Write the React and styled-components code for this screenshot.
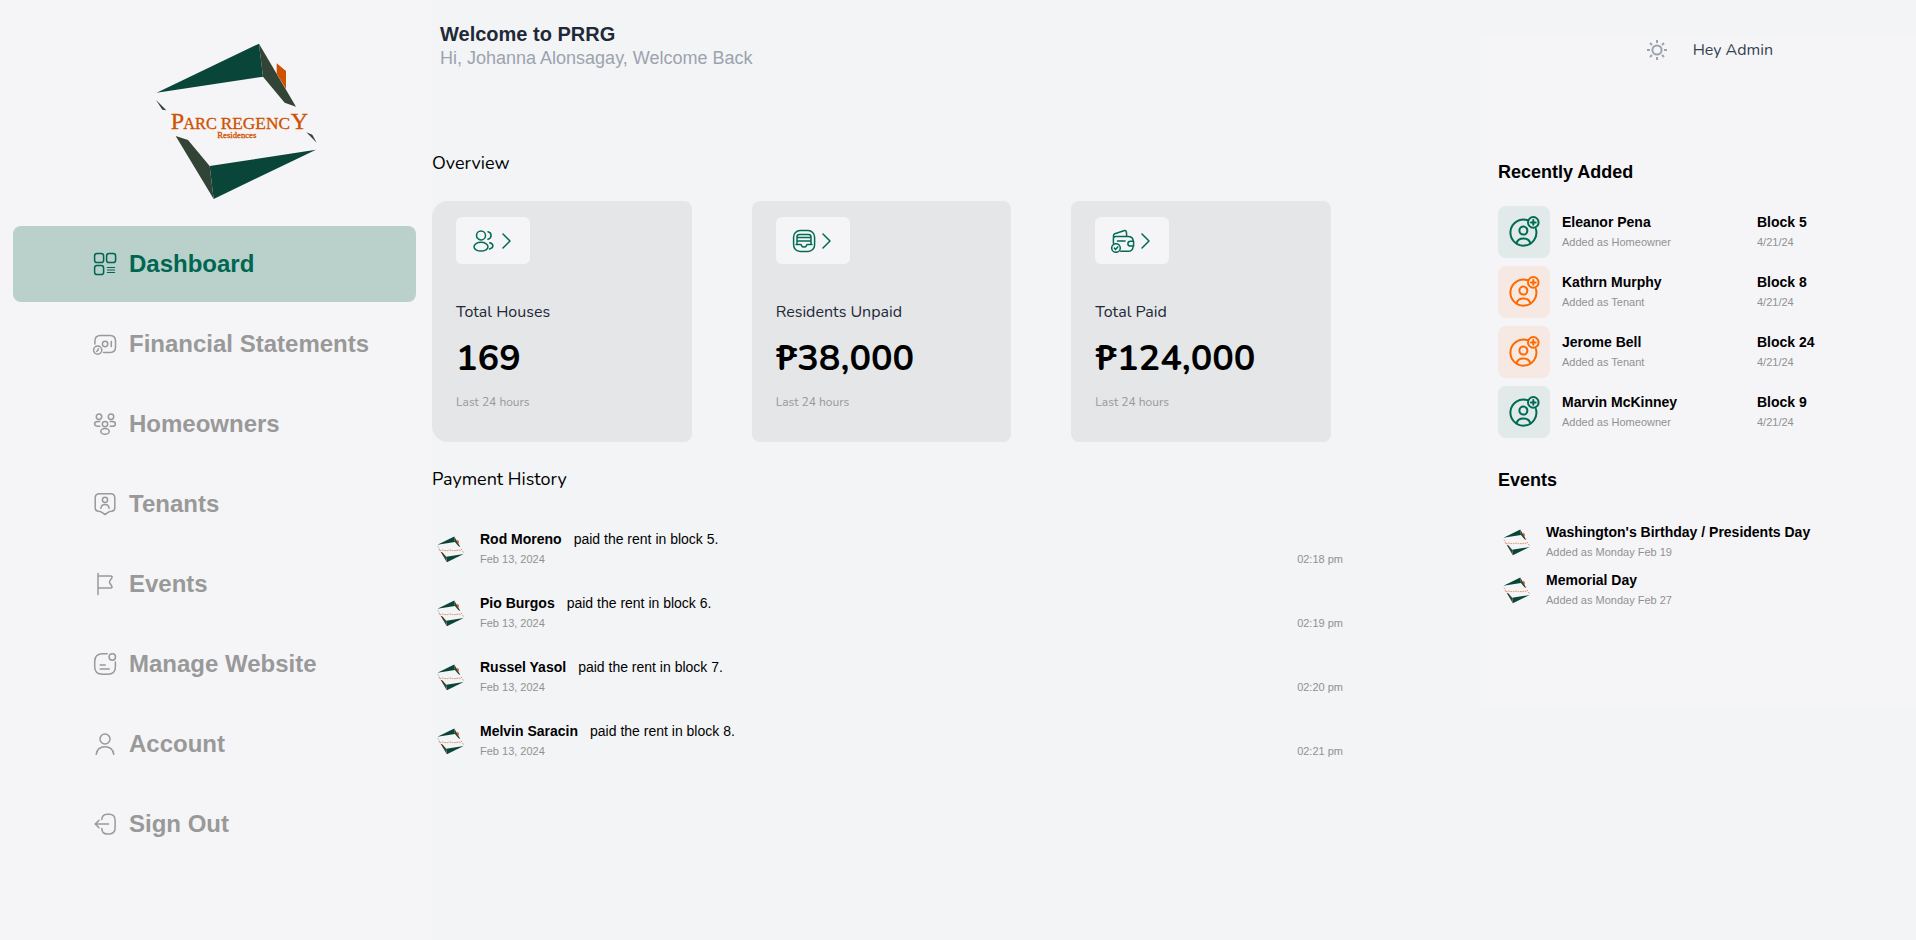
import React from "react";
import styled, { createGlobalStyle } from "styled-components";

const sans = `"Liberation Sans", Arial, sans-serif`;
const rounded = `Nunito, "Open Sans", "Noto Sans", sans-serif`;

const GlobalStyle = createGlobalStyle`
  *, *::before, *::after { box-sizing: border-box; }
  body { margin: 0; background: #f3f4f6; color: #000; font-family: ${sans}; }
  h1, h2, p, ul { margin: 0; padding: 0; }
  ul { list-style: none; }
`;

const Page = styled.div`
  display: grid;
  grid-template-columns: 432fr 1049fr 435fr;
  align-items: start;
  min-height: 100vh;
`;

const Sidebar = styled.aside`
  align-self: stretch;
  padding: 40px 16px 24px 13px;
  background: #f5f5f8;
`;

const Brand = styled.div`
  display: flex;
  justify-content: center;
  padding: 0 0 22px 42px;
`;

const Nav = styled.nav`
  display: flex;
  flex-direction: column;
  gap: 4px;
`;

const NavLink = styled.a`
  display: flex;
  align-items: center;
  gap: 12px;
  height: 76px;
  padding-left: 80px;
  border-radius: 8px;
  font-size: 24px;
  font-weight: 700;
  line-height: 32px;
  text-decoration: none;
  white-space: nowrap;
  color: ${(p) => (p.$active ? "#006652" : "#999999")};
  background: ${(p) => (p.$active ? "#b9d0cb" : "transparent")};
`;

const Main = styled.main`
  padding: 22px 138px 24px 0;
`;

const Welcome = styled.header`
  padding-left: 8px;
  margin-bottom: 79px;
`;

const WelcomeTitle = styled.h1`
  font-size: 20px;
  line-height: 24px;
  color: #1f2937;
`;

const WelcomeText = styled.p`
  font-size: 18px;
  line-height: 24px;
  color: #9ca3af;
`;

const SectionTitle = styled.h2`
  margin-bottom: 24px;
  font-family: ${rounded};
  font-size: 18px;
  font-weight: 400;
  line-height: 28px;
`;

const Cards = styled.div`
  display: grid;
  grid-template-columns: repeat(3, 1fr);
  gap: 60px;
  margin: 0 12px 23px 0;
`;

const Card = styled.article`
  display: flex;
  flex-direction: column;
  align-items: flex-start;
  padding: 16px 24px 32px;
  border-radius: 8px;
  background: #e4e6e8;
  font-family: ${rounded};

  &:first-child {
    border-radius: 16px 8px 8px 16px;
  }
`;

const CardButton = styled.button`
  display: flex;
  align-items: center;
  height: 47px;
  margin-bottom: 36px;
  padding: 0 16px;
  border: 0;
  border-radius: 6px;
  background: #f5f5f8;
  color: #006b54;
  cursor: pointer;
`;

const CardLabel = styled.p`
  font-size: 16px;
  line-height: 24px;
  color: #1f2937;
`;

const CardValue = styled.p`
  margin: 15px 0;
  font-size: 36px;
  font-weight: 700;
  line-height: 40px;
`;

const CardNote = styled.p`
  font-size: 12px;
  line-height: 16px;
  color: #999999;
`;

const PaymentRow = styled.li`
  display: flex;
  align-items: center;
  gap: 12px;
  height: 64px;
`;

const EventRow = styled(PaymentRow)`
  height: 48px;
`;

const LogoSlot = styled.span`
  display: flex;
  justify-content: center;
  flex: none;
  width: 36px;
`;

const Grow = styled.div`
  flex: 1;
`;

const Name = styled.p`
  font-size: 14px;
  font-weight: 700;
  line-height: 20px;
`;

const Action = styled.span`
  margin-left: 12px;
  font-weight: 400;
`;

const Small = styled.p`
  font-size: 11px;
  line-height: 20px;
  color: #919191;
`;

const Time = styled(Small)`
  align-self: flex-end;
  padding-bottom: 12px;
`;

const Panel = styled.aside`
  margin-top: 37px;
  padding: 0 17px 94px;
  background: #f5f5f8;
`;

const PanelTop = styled.div`
  display: flex;
  align-items: center;
  justify-content: flex-end;
  gap: 24px;
  height: 26px;
  margin-bottom: 95px;
  padding-right: 126px;
  font-family: ${rounded};
  font-size: 16px;
  color: #374151;
`;

const ThemeButton = styled.button`
  display: flex;
  padding: 2px;
  border: 0;
  background: none;
  color: #9ca3af;
  cursor: pointer;
`;

const PanelTitle = styled.h2`
  margin-bottom: ${(p) => p.$gap};
  font-size: 18px;
  line-height: 28px;
`;

const RecentList = styled.ul`
  display: flex;
  flex-direction: column;
  gap: 8px;
  margin-bottom: 28px;
`;

const RecentRow = styled.li`
  display: grid;
  grid-template-columns: 52px 183px 1fr;
  align-items: center;
  gap: 12px;
`;

const Tile = styled.span`
  display: flex;
  align-items: center;
  justify-content: center;
  height: 52px;
  border-radius: 8px;
  color: ${(p) => (p.$tenant ? "#ff6a00" : "#006b54")};
  background: ${(p) => (p.$tenant ? "#f6e9e3" : "#e1eae8")};
`;

function Icon({ children, width = 24 }) {
  return (
    <svg
      width={width}
      height="24"
      viewBox={`0 0 ${width} 24`}
      fill="none"
      stroke="currentColor"
      strokeWidth="1.5"
      strokeLinecap="round"
      strokeLinejoin="round"
      aria-hidden="true"
    >
      {children}
    </svg>
  );
}

const icons = {
  dashboard: (
    <>
      <rect x="1.6" y="1.6" width="9" height="9" rx="2.4" />
      <rect x="13.6" y="1.6" width="9" height="9" rx="2.4" />
      <rect x="1.6" y="13.6" width="9" height="9" rx="2.4" />
      <path strokeWidth="1.2" d="M14.4 15.500h7.200M14.4 20.500h7.200" />
      <path strokeWidth="1" d="M14.4 18h7.200" />
    </>
  ),
  finance: (
    <>
      <path d="M1.9 12V9.3c0-4 1.6-5.7 5.6-5.7H17c4 0 5.5 1.6 5.5 5.5v6c0 3.9-1.5 5.5-5.5 5.5h-6.5" />
      <circle cx="12.1" cy="12" r="2.7" />
      <path d="M18.3 9.6v4.8" />
      <circle cx="4.7" cy="18.1" r="4.1" />
      <path d="M5.5 16.7c-.2 1.400-.7 2.100-1.900 2.700" />
    </>
  ),
  homeowners: (
    <>
      <circle cx="6" cy="4.7" r="2.7" />
      <circle cx="18" cy="4.7" r="2.7" />
      <circle cx="12" cy="12.1" r="2.7" />
      <ellipse cx="12" cy="19.4" rx="4.2" ry="2.9" />
      <path d="M6.8 14.3H5c-2 0-3.4-1-3.4-2.4S3 9.5 5 9.5h1.8M17.2 14.3H19c2 0 3.4-1 3.4-2.4S21 9.5 19 9.5h-1.8" />
    </>
  ),
  tenants: (
    <>
      <path d="M6.5 1.7h11c2.900 0 4.300 1.300 4.300 4.200v9.700c0 2.600-1.200 3.600-3.400 3.700-1.300 0-2.100.2-2.900.9L12 22.500l-3.500-2.300c-.8-.7-1.600-.9-2.900-.9-2.200-.1-3.400-1.100-3.400-3.700V5.900c0-2.900 1.400-4.200 4.300-4.200Z" />
      <circle cx="12" cy="7.8" r="2.6" />
      <path d="M7.9 16.3c.3-2.400 1.800-3.700 4.100-3.700s3.800 1.300 4.100 3.700" />
    </>
  ),
  flag: (
    <path d="M5 1.5v21M5 4h12.7c1.500 0 1.800.9 1 2.100l-2 3c-.4.700-.4 1.200 0 1.900l2 3c.7 1.200.4 2-1 2H5" />
  ),
  website: (
    <>
      <path d="M14.2 1.7H9.6c-5.500 0-7.900 2.400-7.900 7.800v5c0 5.400 2.400 7.800 7.800 7.800h5.200c5.300 0 7.700-2.400 7.700-7.800V9.900" />
      <circle cx="19.300" cy="5" r="3.200" />
      <path d="M7.200 13h5M7.200 17h9" />
    </>
  ),
  account: (
    <>
      <circle cx="12" cy="7" r="5" />
      <path d="M3.2 22.3c.8-4.700 4.100-7.500 8.800-7.500s8 2.800 8.800 7.500" />
    </>
  ),
  signout: (
    <path d="M8.8 7.500c.2-3.800 1.900-5.300 5.300-5.300h2c4.500 0 6 2 6 6v7.600c0 4.200-1.700 6.100-6 6.100h-2c-3.400 0-5.100-1.500-5.300-5.300M15.500 12H2.300M6 8.300 2.200 12 6 15.800" />
  ),
  users: (
    <>
      <circle cx="9" cy="6.4" r="4.5" />
      <ellipse cx="9" cy="17.7" rx="7" ry="4.4" />
      <path d="M16 2.800c1.800.5 3.100 1.700 3.100 3.600S17.800 9.600 16 10.200M17.700 13.800c2 .5 3.200 1.600 3.200 3s-1.300 2.700-3.400 3.200" />
    </>
  ),
  inbox: (
    <>
      <rect x="1.6" y="1.6" width="21" height="20.8" rx="6.5" />
      <path d="M5 15.200V7.800c0-1.600.8-2.400 2.400-2.400h9.200c1.600 0 2.400.8 2.400 2.400v7.400M5.500 8.600h13M5.500 11.900h13M4 15.400h4.300c1.200 0 1 .5 1.400 1.500.4.900.9 1.200 2.300 1.200s1.900-.3 2.300-1.200c.4-1 .2-1.500 1.400-1.500H20" />
    </>
  ),
  wallet: (
    <>
      <path d="M2.400 14.300V9.700C2.400 7.900 3 7.600 5 7.600h12c3.600 0 5 1 5.300 4.500M22.200 17.200c-.3 3.500-2 5.100-5 5.100H9.700M2.500 8.700V6.500c0-1 .4-1.500 1.300-1.800l9.100-3c1.500-.5 2.300 0 2.500 1.300l.3 4.600" />
      <path d="M6.500 11.900h7.600M19.500 12.300h3.100v4.800h-3.100c-1.600 0-2.600-1-2.600-2.400s1-2.400 2.600-2.400Z" />
      <circle cx="5" cy="19" r="4.3" />
      <path d="m3.300 19.100 1.200 1.300 2.300-2.500" />
    </>
  ),
};

function SunIcon() {
  return (
    <svg width="20" height="20" viewBox="0 0 20 20" fill="none" stroke="currentColor" strokeWidth="2" aria-hidden="true">
      <circle cx="10" cy="10" r="4.6" />
      <path d="M10 0v3M10 17v3M0 10h3M17 10h3M3 3l2 2M15 15l2 2M3 17l2-2M15 5l2-2" />
    </svg>
  );
}

function UserPlusIcon() {
  return (
    <svg width="32" height="32" viewBox="0 0 32 32" fill="none" stroke="currentColor" strokeWidth="2" strokeLinecap="round" aria-hidden="true">
      <path d="M19.500 4.300A13 13 0 1 0 27.900 13" />
      <circle cx="15.400" cy="14.600" r="4" />
      <path d="M8.400 27.500c.8-3.300 3.300-5 7-5s6.200 1.700 7 5" />
      <circle cx="25.300" cy="6.400" r="5.300" />
      <path d="M25.300 4v4.800M22.900 6.400h4.800" />
    </svg>
  );
}

function Logo({ size, small }) {
  return (
    <svg width={size} height={size} viewBox="70 30 492 492" role="img" aria-label="Parc Regency Residences">
      <path fill="#094639" d="M78 188 385 41l12 99ZM556 359 249 507l-12-99Z" />
      <path fill="#314435" d="m385 41 111 189-34-12-65-78ZM249 507 135 318l37 12 65 78ZM76 210l31 31-12-2ZM527 307l18 7 13 24Z" />
      <path fill="#cf5200" d="m438 100 28 23v54l-28-46Z" />
      {small ? (
        <path
          fill="none"
          stroke="#cf5200"
          strokeWidth="18"
          strokeDasharray="30 14"
          strokeOpacity="0.6"
          d="M112 262v34h30l28-12 40 12h50l40-10 50 10h60l60-10 30 10 24-34"
        />
      ) : (
        <g fill="#cf5200" stroke="#cf5200" strokeWidth="1" fontFamily='"Liberation Serif", serif' aria-hidden="true">
          <text y="298">
            <tspan x="120" fontSize="72">P</tspan>
            <tspan x="158" fontSize="49">ARC</tspan>
            <tspan x="270" fontSize="52">REGENC</tspan>
            <tspan x="480" fontSize="72">Y</tspan>
          </text>
          <text x="260" y="325" fontSize="26">Residences</text>
        </g>
      )}
    </svg>
  );
}

const nav = [
  ["Dashboard", "dashboard"],
  ["Financial Statements", "finance"],
  ["Homeowners", "homeowners"],
  ["Tenants", "tenants"],
  ["Events", "flag"],
  ["Manage Website", "website"],
  ["Account", "account"],
  ["Sign Out", "signout"],
];

const cards = [
  ["Total Houses", "169", "users"],
  ["Residents Unpaid", "₱38,000", "inbox"],
  ["Total Paid", "₱124,000", "wallet"],
];

const payments = [
  ["Rod Moreno", 5, "02:18 pm"],
  ["Pio Burgos", 6, "02:19 pm"],
  ["Russel Yasol", 7, "02:20 pm"],
  ["Melvin Saracin", 8, "02:21 pm"],
];

const recent = [
  ["Eleanor Pena", "Homeowner", 5],
  ["Kathrn Murphy", "Tenant", 8],
  ["Jerome Bell", "Tenant", 24],
  ["Marvin McKinney", "Homeowner", 9],
];

const events = [
  ["Washington's Birthday / Presidents Day", "Added as Monday Feb 19"],
  ["Memorial Day", "Added as Monday Feb 27"],
];

export default function App() {
  return (
    <>
      <GlobalStyle />
      <Page>
        <Sidebar>
          <Brand>
            <Logo size={164} />
          </Brand>
          <Nav>
            {nav.map(([label, icon], i) => (
              <NavLink key={label} href="#" $active={i === 0}>
                <Icon>{icons[icon]}</Icon>
                {label}
              </NavLink>
            ))}
          </Nav>
        </Sidebar>

        <Main>
          <Welcome>
            <WelcomeTitle>Welcome to PRRG</WelcomeTitle>
            <WelcomeText>Hi, Johanna Alonsagay, Welcome Back</WelcomeText>
          </Welcome>

          <SectionTitle>Overview</SectionTitle>
          <Cards>
            {cards.map(([label, value, icon]) => (
              <Card key={label}>
                <CardButton type="button" aria-label={label}>
                  <Icon>{icons[icon]}</Icon>
                  <Icon width={18}>
                    <path d="m7 5 7 7-7 7" />
                  </Icon>
                </CardButton>
                <CardLabel>{label}</CardLabel>
                <CardValue>{value}</CardValue>
                <CardNote>Last 24 hours</CardNote>
              </Card>
            ))}
          </Cards>

          <SectionTitle>Payment History</SectionTitle>
          <ul>
            {payments.map(([name, block, time]) => (
              <PaymentRow key={name}>
                <LogoSlot>
                  <Logo size={27} small />
                </LogoSlot>
                <Grow>
                  <Name>
                    {name}
                    <Action>paid the rent in block {block}.</Action>
                  </Name>
                  <Small>Feb 13, 2024</Small>
                </Grow>
                <Time>{time}</Time>
              </PaymentRow>
            ))}
          </ul>
        </Main>

        <Panel>
          <PanelTop>
            <ThemeButton type="button" aria-label="Toggle theme">
              <SunIcon />
            </ThemeButton>
            <span>Hey Admin</span>
          </PanelTop>

          <PanelTitle $gap="20px">Recently Added</PanelTitle>
          <RecentList>
            {recent.map(([name, role, block]) => (
              <RecentRow key={name}>
                <Tile $tenant={role === "Tenant"}>
                  <UserPlusIcon />
                </Tile>
                <div>
                  <Name>{name}</Name>
                  <Small>Added as {role}</Small>
                </div>
                <div>
                  <Name>Block {block}</Name>
                  <Small>4/21/24</Small>
                </div>
              </RecentRow>
            ))}
          </RecentList>

          <PanelTitle $gap="24px">Events</PanelTitle>
          <ul>
            {events.map(([name, date]) => (
              <EventRow key={name}>
                <LogoSlot>
                  <Logo size={27} small />
                </LogoSlot>
                <Grow>
                  <Name>{name}</Name>
                  <Small>{date}</Small>
                </Grow>
              </EventRow>
            ))}
          </ul>
        </Panel>
      </Page>
    </>
  );
}
